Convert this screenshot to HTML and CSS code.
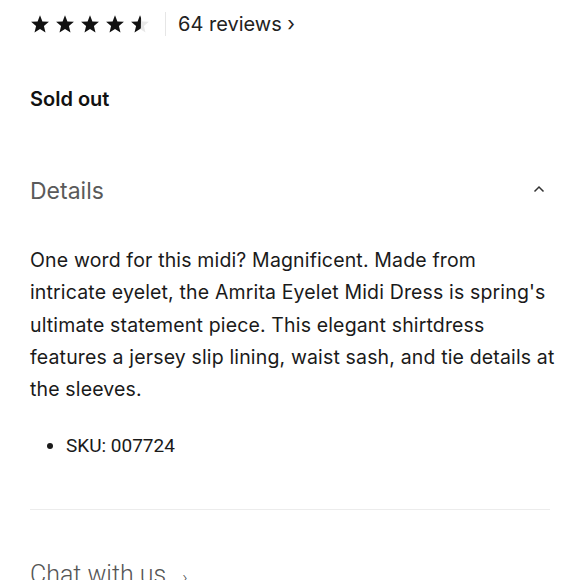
FILE: index.html
```html
<!DOCTYPE html>
<html>
<head>
<meta charset="utf-8">
<link rel="stylesheet" href="styles.css">
</head>
<body>
<div class="page">
  <div class="rating">
    <div class="stars">
      <svg class="star" viewBox="0 0 24 24"><path d="M12 1.5l2.9 7.4 7.8.5-6 5 1.9 7.7L12 17.9l-6.6 4.2 1.9-7.7-6-5 7.8-.5z"/></svg>
      <svg class="star" viewBox="0 0 24 24"><path d="M12 1.5l2.9 7.4 7.8.5-6 5 1.9 7.7L12 17.9l-6.6 4.2 1.9-7.7-6-5 7.8-.5z"/></svg>
      <svg class="star" viewBox="0 0 24 24"><path d="M12 1.5l2.9 7.4 7.8.5-6 5 1.9 7.7L12 17.9l-6.6 4.2 1.9-7.7-6-5 7.8-.5z"/></svg>
      <svg class="star" viewBox="0 0 24 24"><path d="M12 1.5l2.9 7.4 7.8.5-6 5 1.9 7.7L12 17.9l-6.6 4.2 1.9-7.7-6-5 7.8-.5z"/></svg>
      <svg class="star" viewBox="0 0 24 24"><path d="M12 1.5l2.9 7.4 7.8.5-6 5 1.9 7.7L12 17.9z" fill="#e8e8e8"/><path d="M12 1.5L12 17.9l-6.6 4.2 1.9-7.7-6-5 7.8-.5z"/><path d="M12 1.5l1.2 3L13 17l-1 .9z"/></svg>
    </div>
    <span class="sep"></span>
    <a class="reviews">64 reviews ›</a>
  </div>

  <div class="status">Sold out</div>

  <div class="acc-head">
    <span class="acc-title">Details</span>
    <svg class="chev" viewBox="0 0 12 8"><path d="M1.5 6.5L6 2l4.5 4.5" fill="none" stroke="#333" stroke-width="1.5"/></svg>
  </div>

  <p class="desc">One word for this midi? Magnificent. Made from intricate eyelet, the Amrita Eyelet Midi Dress is spring's ultimate statement piece. This elegant shirtdress features a jersey slip lining, waist sash, and tie details at the sleeves.</p>

  <ul class="specs">
    <li>SKU: 007724</li>
  </ul>

  <hr class="rule">

  <div class="chat">Chat with us <span class="chat-arrow">›</span></div>
</div>
</body>
</html>
```

FILE: styles.css
```css
html, body {
  margin: 0;
  padding: 0;
  background: #fff;
}
body {
  font-family: Inter, "Liberation Sans", sans-serif;
  color: #111;
  overflow: hidden;
  height: 580px;
}
.page {
  padding: 0 30px;
}
.rating {
  display: flex;
  align-items: center;
  height: 48px;
}
.stars {
  display: flex;
  gap: 5px;
}
.star {
  width: 20px;
  height: 20px;
  fill: #111;
}
.sep {
  width: 1px;
  height: 24px;
  background: #e6e6e6;
  margin: 0 12px 0 15px;
}
.reviews {
  font-size: 20px;
  color: #222;
}
.status {
  margin-top: 38px;
  font-size: 20px;
  font-weight: 600;
  line-height: 26px;
}
.acc-head {
  margin-top: 64px;
  display: flex;
  align-items: center;
  justify-content: space-between;
  height: 30px;
}
.acc-title {
  font-size: 23px;
  font-weight: 400;
  color: #5a5a5a;
}
.chev {
  width: 12px;
  height: 8px;
  margin-right: 5px;
  margin-top: -4px;
}
.desc {
  margin: 38px -5px 0 0;
  font-size: 19.5px;
  letter-spacing: 0.15px;
  line-height: 32.3px;
  color: #1a1a1a;
}
.specs {
  margin: 26px 0 0;
  padding-left: 36px;
  font-family: Roboto, sans-serif;
  font-size: 19px;
  line-height: 30px;
  color: #1a1a1a;
}
.rule {
  border: none;
  border-top: 1px solid #ececec;
  margin: 48px 0 0;
}
.chat {
  margin-top: 50px;
  font-family: Roboto, sans-serif;
  font-weight: 300;
  font-size: 25px;
  color: #555;
}
.chat-arrow {
  font-size: 18px;
  margin-left: 10px;
}
```
